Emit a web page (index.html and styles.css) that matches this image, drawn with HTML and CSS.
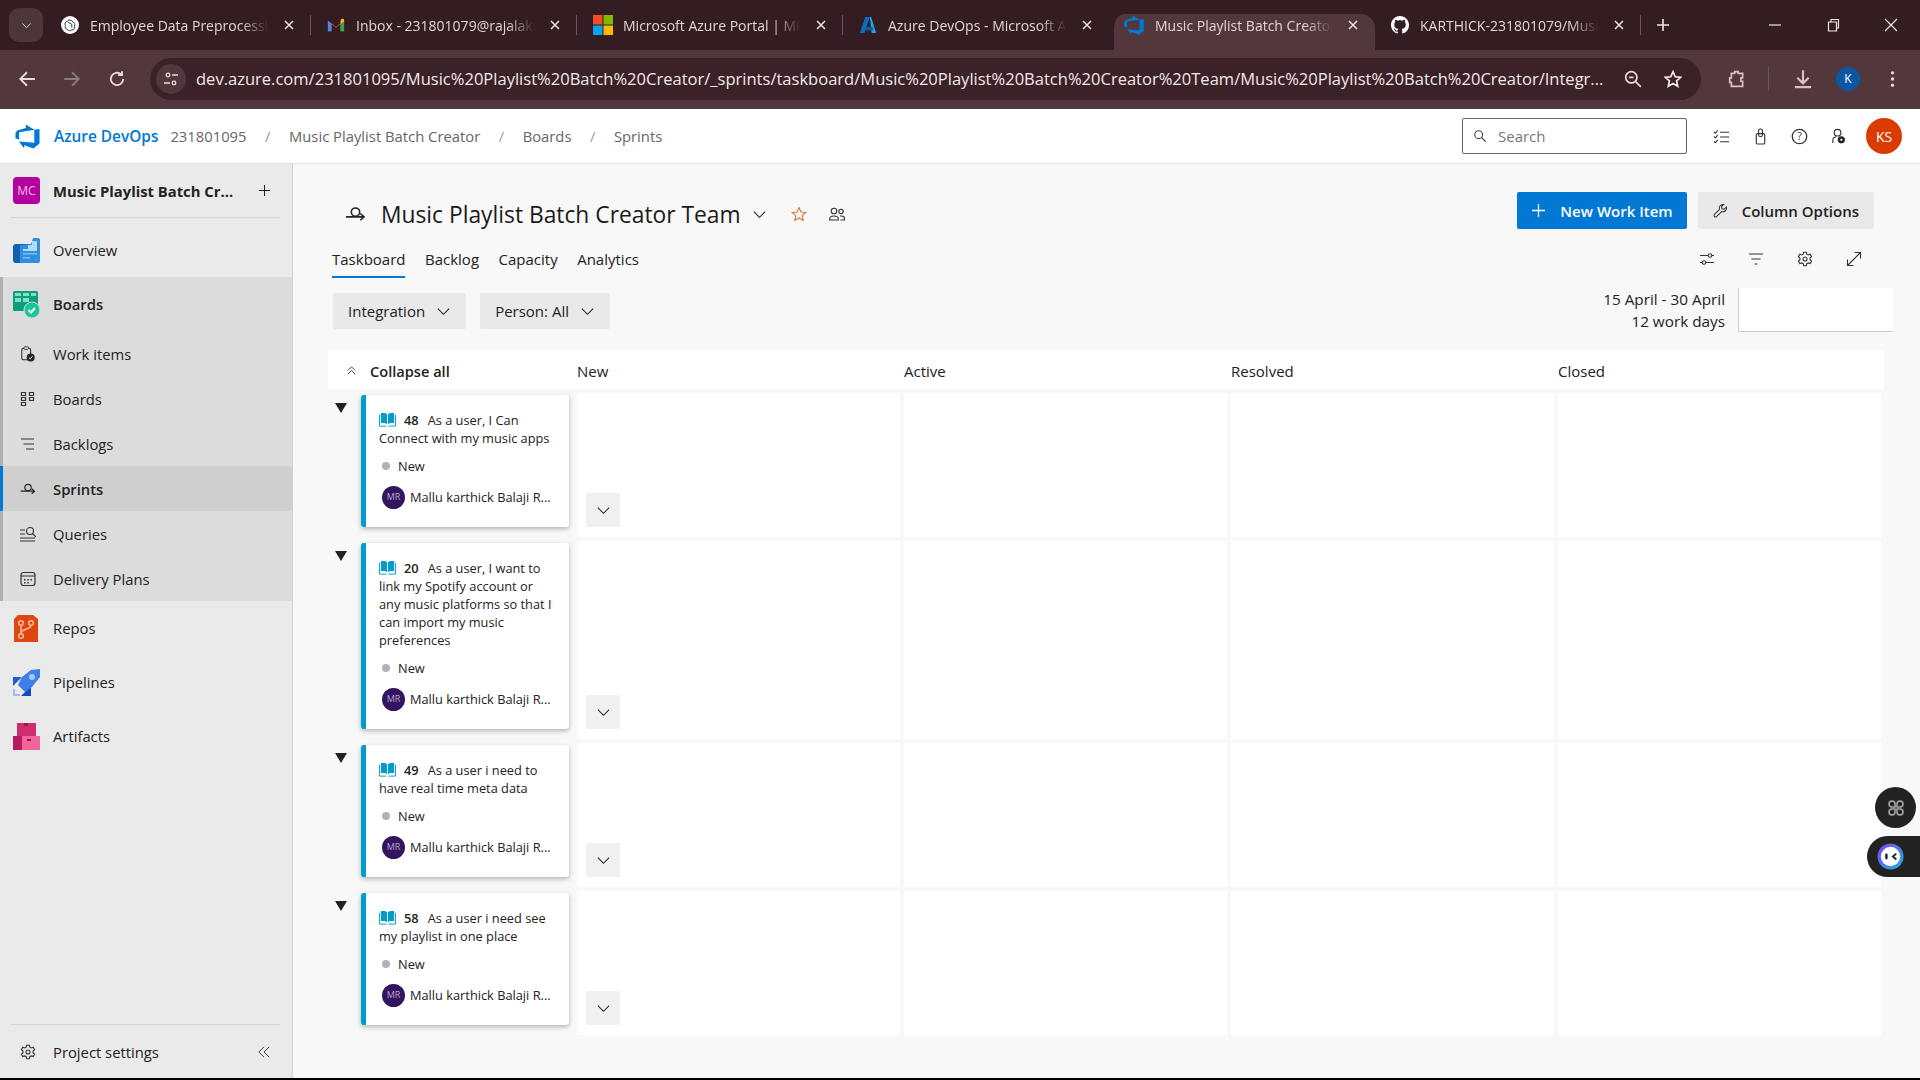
FILE: index.html
```html
<!DOCTYPE html>
<html lang="en">
<head>
    <meta charset="UTF-8">
    <meta name="viewport" content="width=device-width, initial-scale=1.0">
    <title>Music Playlist Batch Creator Team - Taskboard</title>
    <link rel="stylesheet" href="styles.css">
</head>
<body>
    <svg class="defs" width="0" height="0">
        <symbol id="devops" viewBox="0 0 18 18">
            <path fill="#0078d4" d="M17 4v9.74l-4 3.28-6.2-2.26V17l-3.51-4.59 10.23.8V4.44zm-3.41.49L7.85 1v2.29L2.23 4.94 1 6.52v3.59l2.41 1.06V6.17z"/>
        </symbol>
        <symbol id="chev" viewBox="0 0 16 16">
            <path d="M2 5l6 6 6-6" fill="none" stroke="currentColor" stroke-width="1.1"/>
        </symbol>
        <symbol id="close" viewBox="0 0 12 12">
            <path d="M2 2l8 8M10 2l-8 8" fill="none" stroke="currentColor" stroke-width="1.5"/>
        </symbol>
        <symbol id="sprint" viewBox="0 0 22 16">
            <circle cx="11" cy="6" r="4.4" fill="none" stroke="currentColor" stroke-width="1.6"/>
            <path d="M1 11h18M16 7.5l4 3.5-4 3.5" fill="none" stroke="currentColor" stroke-width="1.6"/>
        </symbol>
        <symbol id="gear" viewBox="0 0 16 16">
            <path d="M6.6 1.2h2.8l.4 2 1.500.8 1.900-.7 1.400 2.400-1.500 1.300v1.900l1.500 1.300-1.400 2.400-1.900-.7-1.500.8-.4 2H6.600l-.4-2-1.500-.8-1.900.7-1.400-2.400 1.500-1.300V7L1.400 5.700l1.400-2.400 1.900.7 1.500-.8z" fill="none" stroke="currentColor" stroke-width="1.1"/>
            <circle cx="8" cy="8" r="2" fill="none" stroke="currentColor" stroke-width="1.1"/>
        </symbol>
        <symbol id="story" viewBox="0 0 18 15">
            <path d="M2 .5h2.500c1.800 0 3 .5 4 1.500v10.500c-1-.8-2.200-1.200-4-1.200H2z" fill="#009ccc"/>
            <path d="M16 .5h-2.500c-1.800 0-3 .5-4 1.500v10.500c1-.8 2.200-1.200 4-1.200H16z" fill="#009ccc"/>
            <path d="M.5 2.500v12h7.500M17.500 2.500v12H10" fill="none" stroke="#009ccc"/>
        </symbol>
    </svg>

    <div class="tabstrip">
        <div class="tab-menu"><svg class="i10"><use href="#chev"/></svg></div>
        <div class="tab">
            <svg class="favicon" viewBox="0 0 20 20"><circle cx="10" cy="10" r="10" fill="#fff"/><path d="M10 4.500a3 3 0 0 1 3 2.200 3 3 0 0 1 2 4.500 3 3 0 0 1-3 4.200 3 3 0 0 1-4.800-.5A3 3 0 0 1 5 10.500 3 3 0 0 1 7 5.800a3 3 0 0 1 3-1.300zM8 7l4 2.300v3.400" fill="none" stroke="#333" stroke-width="1.100"/></svg>
            <span class="tab-title">Employee Data Preprocessing</span>
            <svg class="tab-x"><use href="#close"/></svg>
        </div>
        <div class="tab">
            <svg class="favicon" viewBox="0 0 20 16"><path d="M1 15V3l9 7 9-7v12h-4V7l-5 4-5-4v8z" fill="#ea4335"/><path d="M1 15h4V7L1 3.500z" fill="#4285f4"/><path d="M15 15h4V3.500L15 7z" fill="#34a853"/><path d="M15 3v4l4-3V2.500C19 1 17 .5 16 1.500z" fill="#fbbc04"/></svg>
            <span class="tab-title">Inbox - 231801079@rajalakshmi.edu.in</span>
            <svg class="tab-x"><use href="#close"/></svg>
        </div>
        <div class="tab">
            <svg class="favicon ms" viewBox="0 0 20 20"><path fill="#f25022" d="M0 0h9.500v9.500H0z"/><path fill="#7fba00" d="M10.500 0H20v9.500h-9.500z"/><path fill="#00a4ef" d="M0 10.500h9.500V20H0z"/><path fill="#ffb900" d="M10.500 10.500H20V20h-9.500z"/></svg>
            <span class="tab-title">Microsoft Azure Portal | Microsoft</span>
            <svg class="tab-x"><use href="#close"/></svg>
        </div>
        <div class="tab no-sep">
            <svg class="favicon" viewBox="0 0 20 20"><path d="M7 1h5L6 19H1z" fill="#0a6fc2"/><path d="M12 1h1.500L19 19h-5z" fill="#1ea6e8"/><path d="M9 12h6l1 4H6z" fill="#0a5ea8"/></svg>
            <span class="tab-title">Azure DevOps - Microsoft Azure</span>
            <svg class="tab-x"><use href="#close"/></svg>
        </div>
        <div class="tab active no-sep">
            <svg class="favicon devops-ic"><use href="#devops"/></svg>
            <span class="tab-title">Music Playlist Batch Creator Team</span>
            <svg class="tab-x"><use href="#close"/></svg>
        </div>
        <div class="tab">
            <svg class="favicon" viewBox="0 0 16 16"><path fill="#fff" d="M8 0C3.58 0 0 3.58 0 8c0 3.54 2.29 6.53 5.47 7.59.4.07.55-.17.55-.38 0-.19-.01-.82-.01-1.49-2.01.37-2.53-.49-2.69-.94-.09-.23-.48-.94-.82-1.13-.28-.15-.68-.52-.01-.53.63-.01 1.08.58 1.23.82.72 1.21 1.87.87 2.33.66.07-.52.28-.87.51-1.07-1.78-.2-3.64-.89-3.64-3.95 0-.87.31-1.59.82-2.15-.08-.2-.36-1.02.08-2.12 0 0 .67-.21 2.2.82.64-.18 1.32-.27 2-.27.68 0 1.36.09 2 .27 1.53-1.04 2.2-.82 2.2-.82.44 1.1.16 1.92.08 2.12.51.56.82 1.27.82 2.15 0 3.07-1.87 3.75-3.65 3.95.29.25.54.73.54 1.48 0 1.07-.01 1.93-.01 2.2 0 .21.15.46.55.38A8.013 8.013 0 0016 8c0-4.42-3.58-8-8-8z"/></svg>
            <span class="tab-title">KARTHICK-231801079/Music-Playlist</span>
            <svg class="tab-x"><use href="#close"/></svg>
        </div>
        <svg class="new-tab" viewBox="0 0 14 14"><path d="M7 1v12M1 7h12" stroke="#f0e4e6" stroke-width="1.600"/></svg>
        <div class="win-controls">
            <svg viewBox="0 0 14 14"><path d="M1 7h12" stroke="#f0e4e6" stroke-width="1.200"/></svg>
            <svg viewBox="0 0 14 14"><path d="M2.500 4h8v9h-8zM5 4V1.500h7.500V10H10.500" fill="none" stroke="#f0e4e6" stroke-width="1.200"/></svg>
            <svg viewBox="0 0 14 14"><path d="M1 1l12 12M13 1L1 13" stroke="#f0e4e6" stroke-width="1.200"/></svg>
        </div>
    </div>

    <div class="toolbar">
        <svg class="tool" viewBox="0 0 16 16"><path d="M15 8H2M8 2L2 8l6 6" fill="none" stroke="#eadcde" stroke-width="1.600"/></svg>
        <svg class="tool" viewBox="0 0 16 16"><path d="M1 8h13M8 2l6 6-6 6" fill="none" stroke="#8d7a7d" stroke-width="1.600"/></svg>
        <svg class="tool" viewBox="0 0 16 16"><path d="M13.500 8a5.500 5.500 0 1 1-1.700-4M12.500 1v3.500H9" fill="none" stroke="#eadcde" stroke-width="1.600"/></svg>
        <div class="address">
            <span class="site-info"><svg viewBox="0 0 16 16"><circle cx="5" cy="4" r="1.800" fill="none" stroke="#eadcde" stroke-width="1.300"/><path d="M9 4h6M1 12h6" stroke="#eadcde" stroke-width="1.300"/><circle cx="11" cy="12" r="1.800" fill="none" stroke="#eadcde" stroke-width="1.300"/></svg></span>
            <span class="url">dev.azure.com/231801095/Music%20Playlist%20Batch%20Creator/_sprints/taskboard/Music%20Playlist%20Batch%20Creator%20Team/Music%20Playlist%20Batch%20Creator/Integr...</span>
            <svg class="tool zoom-ic" viewBox="0 0 16 16"><circle cx="6.500" cy="6.500" r="5" fill="none" stroke="#eadcde" stroke-width="1.500"/><path d="M10.500 10.500L15 15M4.500 6.500h4" stroke="#eadcde" stroke-width="1.500"/></svg>
            <svg class="tool star-ic" viewBox="0 0 16 16"><path d="M8 1.500l2 4.500 4.800.5-3.600 3.200 1 4.800L8 12l-4.200 2.500 1-4.800L1.200 6.500 6 6z" fill="none" stroke="#f3e8ea" stroke-width="1.500"/></svg>
        </div>
        <svg class="tool ext-ic" viewBox="0 0 16 16"><path d="M3 3h3V1.500h3V3h4v4h-1.500v3H13v4.500H3V11H1.500V7H3z" fill="none" stroke="#e6bcc4" stroke-width="1.500"/></svg>
        <span class="tool-sep"></span>
        <svg class="tool dl-ic" viewBox="0 0 16 16"><path d="M8 1v10M3.500 7L8 11.500 12.500 7M1.500 14.500h13" fill="none" stroke="#e6bcc4" stroke-width="1.700"/></svg>
        <span class="profile">K</span>
        <svg class="tool menu-ic" viewBox="0 0 4 16"><circle cx="2" cy="2.500" r="1.500" fill="#e6d6d8"/><circle cx="2" cy="8" r="1.500" fill="#e6d6d8"/><circle cx="2" cy="13.500" r="1.500" fill="#e6d6d8"/></svg>
    </div>

    <header class="topbar">
        <svg class="logo"><use href="#devops"/></svg>
        <span class="brand">Azure DevOps</span>
        <nav class="crumbs">
            <span>231801095</span><i>/</i>
            <span>Music Playlist Batch Creator</span><i>/</i>
            <span>Boards</span><i>/</i>
            <span>Sprints</span>
        </nav>
        <div class="search">
            <svg viewBox="0 0 16 16"><circle cx="6.500" cy="6.500" r="4.500" fill="none" stroke="#444" stroke-width="1.300"/><path d="M10 10l4.500 4.500" stroke="#444" stroke-width="1.300"/></svg>
            <span>Search</span>
        </div>
        <div class="top-icons">
            <svg viewBox="0 0 18 16"><path d="M1 3l1.500 1.500L5 1.500M1 8l1.500 1.500L5 6.500M1 13l1.500 1.500L5 11.500" fill="none" stroke="#333" stroke-width="1.100"/><path d="M7.500 3.500H17M7.500 8.500H17M7.500 13.500H17" stroke="#333" stroke-width="1.200"/></svg>
            <svg viewBox="0 0 16 18"><rect x="3.500" y="6" width="9" height="11" rx="1.500" fill="none" stroke="#333" stroke-width="1.200"/><rect x="6" y="1" width="4" height="8" rx="1.500" fill="none" stroke="#333" stroke-width="1.200"/></svg>
            <svg viewBox="0 0 16 16"><circle cx="8" cy="8" r="6.800" fill="none" stroke="#333" stroke-width="1.200"/><text x="8" y="11.500" class="help-q">?</text></svg>
            <svg viewBox="0 0 16 18"><circle cx="7" cy="5" r="3.500" fill="none" stroke="#333" stroke-width="1.200"/><path d="M2 16v-3c0-2 1.500-3.500 3.500-3.500" fill="none" stroke="#333" stroke-width="1.200"/><circle cx="11" cy="12.500" r="3.800" fill="#222"/><circle cx="11" cy="12.500" r="1.200" fill="#fff"/></svg>
        </div>
        <span class="avatar">KS</span>
    </header>

    <div class="page">
        <aside class="sidebar">
            <div class="project">
                <span class="project-badge">MC</span>
                <span class="project-name">Music Playlist Batch Cr...</span>
                <svg class="plus" viewBox="0 0 14 14"><path d="M7 1v12M1 7h12" stroke="#222" stroke-width="1.100"/></svg>
            </div>
            <a class="nav-item">
                <svg class="hub" viewBox="0 0 27 25"><path d="M3 6h19v19H3a3 3 0 0 1-3-3V9a3 3 0 0 1 3-3z" fill="#1261b0"/><path d="M7 7l11-1 2-6h5a2 2 0 0 1 2 2v21a2 2 0 0 1-2 2H7z" fill="#2f8fe0"/><path d="M10 11h5V7h4V3h5v10H10z" fill="#b5dcf7"/><path d="M10 15h14v1.500H10zM10 19h7v1.500h-7z" fill="#7dbdee"/></svg>
                <span>Overview</span>
            </a>
            <div class="nav-group">
                <a class="nav-item head">
                    <svg class="hub" viewBox="0 0 27 27"><rect width="25" height="20" rx="1.500" fill="#0f9d7a"/><path d="M2 2h6v3H2zM10 2h6v3h-6zM18 2h5v3h-5zM2 7h6v4H2zM10 7h6v4h-6z" fill="#7fe0c8"/><circle cx="19" cy="19" r="8" fill="#16c79a" stroke="#dcdcdc"/><path d="M15.500 19l2.500 2.500 4-4.500" fill="none" stroke="#fff" stroke-width="2"/></svg>
                    <span>Boards</span>
                </a>
                <a class="nav-sub">
                    <svg viewBox="0 0 16 18"><rect x="1" y="2.500" width="10" height="13" rx="2" fill="none" stroke="#333" stroke-width="1.200"/><rect x="3.500" y=".8" width="5" height="3" rx="1" fill="#dcdcdc" stroke="#333"/><circle cx="11" cy="13" r="4.500" fill="#222"/><path d="M9 13l1.500 1.500 2.500-3" fill="none" stroke="#fff"/></svg>
                    <span>Work items</span>
                </a>
                <a class="nav-sub">
                    <svg viewBox="0 0 16 16"><path d="M1.500 1.500h4v3h-4zM1.500 6.500h4v3h-4zM1.500 11.500h4v3h-4zM9.500 1.500h4v3h-4zM9.500 6.500h4v3h-4z" fill="none" stroke="#333" stroke-width="1.200"/></svg>
                    <span>Boards</span>
                </a>
                <a class="nav-sub">
                    <svg viewBox="0 0 16 16"><path d="M1 3h13M3.500 8H14M6 13h8" stroke="#333" stroke-width="1.200"/></svg>
                    <span>Backlogs</span>
                </a>
                <a class="nav-sub current">
                    <svg viewBox="0 0 22 16"><use href="#sprint"/></svg>
                    <span>Sprints</span>
                </a>
                <a class="nav-sub">
                    <svg viewBox="0 0 16 16"><path d="M0 4h5M0 8h5M0 12h15M0 15h15" stroke="#333" stroke-width="1.100"/><circle cx="10" cy="5" r="3.500" fill="none" stroke="#333" stroke-width="1.100"/><path d="M12.500 7.500L16 11" stroke="#333" stroke-width="1.100"/></svg>
                    <span>Queries</span>
                </a>
                <a class="nav-sub">
                    <svg viewBox="0 0 16 16"><rect x="1" y="1.500" width="14" height="13" rx="2.500" fill="none" stroke="#333" stroke-width="1.200"/><path d="M1 5h14" stroke="#333"/><path d="M4 8h1.500v1.500H4zM7.300 8h1.500v1.500H7.300zM10.500 8H12v1.500h-1.500zM4 11h1.500v1.500H4zM7.300 11h1.500v1.500H7.300z" fill="#333"/></svg>
                    <span>Delivery Plans</span>
                </a>
            </div>
            <a class="nav-item">
                <svg class="hub" viewBox="0 0 27 27"><path d="M5 0h15l5 4v23H1V4z" fill="#e0470e"/><g fill="none" stroke="#f9b9a0" stroke-width="1.500"><circle cx="8" cy="8" r="2.300"/><circle cx="18" cy="8" r="2.300"/><circle cx="8" cy="21" r="2.300"/><path d="M8 10.500v8M18 10.500c0 4-10 3-10 8"/></g></svg>
                <span>Repos</span>
            </a>
            <a class="nav-item">
                <svg class="hub" viewBox="0 0 27 27"><path d="M0 8h9l-9 9z" fill="#1d5fd0"/><path d="M18 17v10H8z" fill="#0f4cc0"/><path d="M9 8l9-7 9-1v8l-8 10-7 5-7-7z" fill="#3f7de8"/><circle cx="19" cy="8" r="3" fill="#a9c8f7"/><path d="M0 20h2v5h5v2H0z" fill="#9cbcf5"/></svg>
                <span>Pipelines</span>
            </a>
            <a class="nav-item">
                <svg class="hub" viewBox="0 0 27 27"><rect x="4" width="19" height="14" fill="#d02c70"/><rect y="13" width="14" height="14" fill="#b81a5e"/><rect x="9" y="13" width="18" height="14" fill="#f0659c"/><path d="M11 0h4v3h-4zM14 16h4v2h-4z" fill="#9a1450"/></svg>
                <span>Artifacts</span>
            </a>
            <div class="side-foot">
                <svg class="gear-ic"><use href="#gear"/></svg>
                <span>Project settings</span>
                <svg class="collapse" viewBox="0 0 14 14"><path d="M7 1L1 7l6 6M13 1L7 7l6 6" fill="none" stroke="#333" stroke-width="1.100"/></svg>
            </div>
        </aside>

        <main class="content">
            <div class="title-row">
                <svg class="title-ic"><use href="#sprint"/></svg>
                <h1>Music Playlist Batch Creator Team</h1>
                <svg class="title-chev"><use href="#chev"/></svg>
                <svg class="star" viewBox="0 0 16 16"><path d="M8 1.500l2 4.500 4.800.5-3.600 3.200 1 4.800L8 12l-4.200 2.500 1-4.800L1.200 6.500 6 6z" fill="none" stroke="#d9783a" stroke-width="1.100"/></svg>
                <svg class="people" viewBox="0 0 16 14"><circle cx="5" cy="3.500" r="2.800" fill="none" stroke="#333" stroke-width="1.100"/><path d="M.7 12.500v-1c0-2 1.500-3 4.300-3s4.300 1 4.300 3v1z" fill="none" stroke="#333" stroke-width="1.100"/><circle cx="12" cy="4" r="2.200" fill="none" stroke="#333" stroke-width="1.100"/><path d="M11 8.500h1.500c1.800 0 3 .8 3 2.500v1.500h-4" fill="none" stroke="#333" stroke-width="1.100"/></svg>
                <div class="actions">
                    <button class="btn primary"><svg viewBox="0 0 14 14"><path d="M7 1v12M1 7h12" stroke="#fff" stroke-width="1.200"/></svg>New Work Item</button>
                    <button class="btn"><svg viewBox="0 0 16 16"><path d="M10.500 1.500a4 4 0 0 0-3.600 5.300L1.500 12.200a1.600 1.600 0 0 0 2.300 2.300l5.400-5.400a4 4 0 0 0 5.200-4.800l-2.500 2.400-2.300-.6-.6-2.300 2.400-2.300z" fill="none" stroke="#333" stroke-width="1.100"/></svg>Column Options</button>
                </div>
            </div>

            <div class="tabs-row">
                <a class="page-tab on">Taskboard</a>
                <a class="page-tab">Backlog</a>
                <a class="page-tab">Capacity</a>
                <a class="page-tab">Analytics</a>
                <div class="view-icons">
                    <svg viewBox="0 0 16 16"><path d="M1 4.500h8M13 4.500h2M1 11.500h2M7 11.500h8" stroke="#333" stroke-width="1.100"/><circle cx="11" cy="4.500" r="1.800" fill="none" stroke="#333" stroke-width="1.100"/><circle cx="5" cy="11.500" r="1.800" fill="none" stroke="#333" stroke-width="1.100"/></svg>
                    <svg viewBox="0 0 16 16"><path d="M1 3h14M3.500 8h9M6.500 13h3" stroke="#333" stroke-width="1.200"/></svg>
                    <svg><use href="#gear"/></svg>
                    <svg viewBox="0 0 16 16"><path d="M1.500 14.500l13-13M8.500 1.500h6v6M1.500 8.500v6h6" fill="none" stroke="#333" stroke-width="1.100"/></svg>
                </div>
            </div>

            <div class="filter-row">
                <button class="pick">Integration<svg><use href="#chev"/></svg></button>
                <button class="pick">Person: All<svg><use href="#chev"/></svg></button>
                <div class="sprint-dates">
                    <div>15 April - 30 April</div>
                    <div>12 work days</div>
                </div>
                <div class="burndown"></div>
            </div>

            <div class="board">
                <div class="board-head">
                    <div class="collapse-all"><svg viewBox="0 0 12 12"><path d="M2 6l4-4 4 4M2 10l4-4 4 4" fill="none" stroke="#333"/></svg>Collapse all</div>
                    <div>New</div>
                    <div>Active</div>
                    <div>Resolved</div>
                    <div>Closed</div>
                </div>

                <div class="board-row">
                    <div class="story">
                        <span class="tri"></span>
                        <div class="card">
                            <p class="card-title"><svg class="story-ic"><use href="#story"/></svg><b>48</b>As a user, I Can Connect with my music apps</p>
                            <div class="card-state"><i></i>New</div>
                            <div class="card-owner"><span class="mr">MR</span><span>Mallu karthick Balaji R...</span></div>
                        </div>
                    </div>
                    <div class="cell first"><button class="more"><svg><use href="#chev"/></svg></button></div>
                    <div class="cell"></div>
                    <div class="cell"></div>
                    <div class="cell"></div>
                </div>

                <div class="board-row">
                    <div class="story">
                        <span class="tri"></span>
                        <div class="card">
                            <p class="card-title"><svg class="story-ic"><use href="#story"/></svg><b>20</b>As a user, I want to link my Spotify account or any music platforms so that I can import my music preferences</p>
                            <div class="card-state"><i></i>New</div>
                            <div class="card-owner"><span class="mr">MR</span><span>Mallu karthick Balaji R...</span></div>
                        </div>
                    </div>
                    <div class="cell first"><button class="more"><svg><use href="#chev"/></svg></button></div>
                    <div class="cell"></div>
                    <div class="cell"></div>
                    <div class="cell"></div>
                </div>

                <div class="board-row">
                    <div class="story">
                        <span class="tri"></span>
                        <div class="card">
                            <p class="card-title"><svg class="story-ic"><use href="#story"/></svg><b>49</b>As a user i need to have real time meta data</p>
                            <div class="card-state"><i></i>New</div>
                            <div class="card-owner"><span class="mr">MR</span><span>Mallu karthick Balaji R...</span></div>
                        </div>
                    </div>
                    <div class="cell first"><button class="more"><svg><use href="#chev"/></svg></button></div>
                    <div class="cell"></div>
                    <div class="cell"></div>
                    <div class="cell"></div>
                </div>

                <div class="board-row">
                    <div class="story">
                        <span class="tri"></span>
                        <div class="card">
                            <p class="card-title"><svg class="story-ic"><use href="#story"/></svg><b>58</b>As a user i need see my playlist in one place</p>
                            <div class="card-state"><i></i>New</div>
                            <div class="card-owner"><span class="mr">MR</span><span>Mallu karthick Balaji R...</span></div>
                        </div>
                    </div>
                    <div class="cell first"><button class="more"><svg><use href="#chev"/></svg></button></div>
                    <div class="cell"></div>
                    <div class="cell"></div>
                    <div class="cell"></div>
                </div>
            </div>
        </main>
    </div>

    <div class="float-round">
        <svg viewBox="0 0 18 18"><g fill="none" stroke="#aaa" stroke-width="1.500"><path d="M2 5a3 3 0 0 1 6 0v3H5a3 3 0 0 1-3-3zM10 5a3 3 0 0 1 6 0 3 3 0 0 1-3 3h-3zM2 13a3 3 0 0 1 3-3h3v3a3 3 0 0 1-6 0zM10 10h3a3 3 0 0 1 0 6 3 3 0 0 1-3-3z"/></g></svg>
    </div>
    <div class="float-pill">
        <svg viewBox="0 0 28 28"><defs><linearGradient id="ring" x1="0" y1="0" x2="1" y2="1"><stop offset="0" stop-color="#8a3df0"/><stop offset="1" stop-color="#18b5e0"/></linearGradient></defs><circle cx="14" cy="14" r="13.500" fill="url(#ring)"/><circle cx="14" cy="14" r="10" fill="#fff"/><rect x="8.500" y="11" width="2.500" height="6" rx="1.200" fill="#222"/><path d="M20 11l-3.500 3 3.500 3" fill="none" stroke="#222" stroke-width="2"/></svg>
    </div>
</body>
</html>
```

FILE: styles.css
```css
* {
    box-sizing: border-box;
    margin: 0;
    padding: 0;
}
html, body {
    height: 1080px;
    overflow: hidden;
}
body {
    font-family: "Open Sans", "Noto Sans", sans-serif;
    font-size: 14px;
    color: #222;
    background-color: #f8f8f8;
    border-bottom: 2px solid #000;
    display: flex;
    flex-direction: column;
    position: relative;
}
svg {
    display: block;
    flex: none;
}
button {
    font: inherit;
    color: inherit;
    border: none;
}
.defs {
    position: absolute;
}

/* browser tabs */
.tabstrip {
    height: 50px;
    flex: none;
    background-color: #331c22;
    color: #e3d3d6;
    display: flex;
    align-items: flex-end;
    padding-left: 9px;
    position: relative;
}
.tab-menu {
    width: 34px;
    height: 34px;
    margin: 0 2px 8px 0;
    border-radius: 10px;
    background-color: #4d363b;
    display: flex;
    align-items: center;
    justify-content: center;
    color: #fff;
}
.i10 {
    width: 11px;
    height: 11px;
}
.tab {
    width: 266px;
    height: 36px;
    padding: 0 16px 14px 16px;
    display: flex;
    align-items: center;
    position: relative;
    border-radius: 10px 10px 0 0;
}
.tab::after {
    content: "";
    position: absolute;
    right: 0;
    top: 1px;
    height: 20px;
    width: 1px;
    background-color: #6d565a;
}
.tab.no-sep::after {
    display: none;
}
.tab.active {
    background-color: #52373c;
    background-clip: padding-box;
    border-left: 5px solid transparent;
    padding-left: 11px;
    border-radius: 15px 14px 0 0;
}
.favicon {
    width: 18px;
    height: 18px;
    margin-right: 11px;
}
.favicon.ms {
    width: 20px;
    height: 20px;
    margin-right: 10px;
}
.favicon.devops-ic {
    width: 22px;
    height: 22px;
    margin: 0 10px 0 -2px;
}
.tab-title {
    flex: 1;
    min-width: 0;
    overflow: hidden;
    white-space: nowrap;
    font-size: 14px;
    -webkit-mask-image: linear-gradient(to right, #000 84%, transparent);
    mask-image: linear-gradient(to right, #000 84%, transparent);
}
.tab-x {
    width: 12px;
    height: 12px;
    margin-left: 14px;
    color: #f0e4e6;
}
.new-tab {
    width: 14px;
    height: 14px;
    margin: 0 0 18px 15px;
}
.win-controls {
    margin: 0 0 18px auto;
    display: flex;
    gap: 44px;
    padding-right: 22px;
}
.win-controls svg {
    width: 14px;
    height: 14px;
}

/* browser toolbar */
.toolbar {
    height: 59px;
    flex: none;
    background-color: #52373c;
    display: flex;
    align-items: center;
    padding: 0 0 2px 18px;
}
.tool {
    width: 18px;
    height: 18px;
    margin-right: 27px;
}
.address {
    width: 1551px;
    height: 42px;
    margin-left: -3px;
    border-radius: 21px;
    background-color: #3a2228;
    display: flex;
    align-items: center;
    padding-left: 6px;
}
.site-info {
    width: 30px;
    height: 30px;
    border-radius: 50%;
    background-color: #52373c;
    display: flex;
    align-items: center;
    justify-content: center;
    margin-right: 10px;
}
.site-info svg {
    width: 16px;
    height: 16px;
}
.url {
    width: 1410px;
    font-size: 16.55px;
    color: #f3e8ea;
    white-space: nowrap;
    overflow: hidden;
}
.zoom-ic {
    margin: 0 0 0 18px;
}
.star-ic {
    margin: 0 0 0 22px;
}
.ext-ic {
    margin: 0 0 0 27px;
}
.tool-sep {
    width: 1px;
    height: 24px;
    background-color: #6d565a;
    margin: 0 24px 0 22px;
}
.dl-ic {
    margin: 0;
    width: 20px;
    height: 20px;
}
.profile {
    width: 24px;
    height: 24px;
    border-radius: 50%;
    background-color: #0b57a4;
    color: #fff;
    font-size: 12px;
    display: flex;
    align-items: center;
    justify-content: center;
    margin-left: 23px;
}
.menu-ic {
    width: 5px;
    height: 18px;
    margin: 0 0 0 30px;
}

/* azure devops header */
.topbar {
    height: 55px;
    flex: none;
    background-color: #fff;
    border-bottom: 1px solid #e3e3e3;
    display: flex;
    align-items: center;
    padding: 0 18px 0 14px;
}
.logo {
    width: 27px;
    height: 27px;
    margin-right: 13px;
}
.brand {
    color: #0078d4;
    font-weight: 600;
    font-size: 15.4px;
    margin-right: 12px;
}
.crumbs {
    display: flex;
    gap: 18.5px;
    color: #666;
    font-size: 14.8px;
}
.crumbs i {
    font-style: normal;
    color: #999;
}
.search {
    margin-left: auto;
    width: 225px;
    height: 36px;
    border: 1px solid #666;
    border-radius: 2px;
    display: flex;
    align-items: center;
    gap: 11px;
    padding-left: 10px;
    font-size: 15px;
    color: #777;
}
.search svg {
    width: 14px;
    height: 14px;
}
.top-icons {
    display: flex;
    align-items: center;
    gap: 22px;
    margin: 0 19px 0 26px;
}
.top-icons svg {
    width: 17px;
    height: 17px;
}
.help-q {
    font-size: 10px;
    text-anchor: middle;
    fill: #333;
}
.avatar {
    width: 36px;
    height: 36px;
    border-radius: 50%;
    background-color: #da3b01;
    color: #fff;
    font-size: 14px;
    display: flex;
    align-items: center;
    justify-content: center;
}

/* left nav */
.page {
    flex: 1;
    min-height: 0;
    display: flex;
}
.sidebar {
    width: 293px;
    flex: none;
    background-color: #eaeaea;
    border-right: 1px solid #d2d2d2;
    display: flex;
    flex-direction: column;
    font-size: 14.8px;
    color: #222;
}
.project {
    height: 54px;
    margin: 0 12px 5px 11px;
    border-bottom: 1px solid #d4d4d4;
    display: flex;
    align-items: center;
    flex: none;
    padding-left: 2px;
}
.project-badge {
    width: 27px;
    height: 27px;
    border-radius: 4px;
    background-color: #b4009e;
    color: #f0c0e8;
    font-size: 12px;
    display: flex;
    align-items: center;
    justify-content: center;
    margin-right: 13px;
}
.project-name {
    font-weight: 700;
    flex: 1;
    white-space: nowrap;
}
.plus {
    width: 13px;
    height: 13px;
    margin: 0 9px 0 0;
}
.nav-item {
    height: 54px;
    flex: none;
    display: flex;
    align-items: center;
    padding-left: 13px;
}
.hub {
    width: 27px;
    height: 27px;
    margin-right: 13px;
}
.nav-group {
    background-color: #dcdcdc;
    border-left: 3px solid #b0b0b0;
}
.nav-group .nav-item {
    padding-left: 10px;
    font-weight: 600;
}
.nav-sub {
    height: 45px;
    display: flex;
    align-items: center;
    padding-left: 17px;
    position: relative;
}
.nav-sub svg {
    width: 16px;
    height: 16px;
    margin-right: 17px;
}
.nav-sub.current {
    background-color: #cfcfcf;
    font-weight: 600;
    border-radius: 0 3px 3px 0;
}
.nav-sub.current::before {
    content: "";
    position: absolute;
    left: -3px;
    top: 0;
    bottom: 0;
    width: 3px;
    background-color: #0078d4;
}
.side-foot {
    margin: auto 12px 0 11px;
    height: 54px;
    border-top: 1px solid #d4d4d4;
    display: flex;
    align-items: center;
    padding-left: 9px;
}
.gear-ic {
    width: 16px;
    height: 16px;
    margin-right: 17px;
    color: #333;
}
.side-foot span {
    flex: 1;
}
.collapse {
    width: 12px;
    height: 12px;
    margin-right: 10px;
}

/* main content */
.content {
    flex: 1;
    min-width: 0;
    padding: 0 36px 0 35px;
    position: relative;
}
.title-row {
    height: 77px;
    padding: 23px 0 0 17px;
    display: flex;
    align-items: center;
}
.title-ic {
    width: 21px;
    height: 16px;
    margin-right: 15px;
    color: #222;
}
h1 {
    font-size: 22.8px;
    font-weight: 500;
    color: #1b1b1b;
    white-space: nowrap;
}
.title-chev {
    width: 15px;
    height: 15px;
    margin-left: 11px;
}
.star {
    width: 16px;
    height: 16px;
    margin-left: 24px;
}
.people {
    width: 16px;
    height: 15px;
    margin-left: 22px;
}
.actions {
    margin: 5px 0 0 auto;
    align-self: flex-start;
    display: flex;
    gap: 11px;
    padding-right: 10px;
}
.btn {
    height: 37px;
    padding: 0 15px;
    border-radius: 2px;
    background-color: #e9e9e9;
    font-weight: 600;
    font-size: 15px;
    display: flex;
    align-items: center;
    gap: 14px;
    color: #222;
}
.btn svg {
    width: 15px;
    height: 15px;
}
.btn.primary {
    padding: 0 14px;
    background-color: #0078d4;
    color: #fff;
}
.tabs-row {
    height: 47px;
    display: flex;
    align-items: flex-start;
    gap: 19.5px;
    padding: 4px 0 0 4px;
    font-size: 15px;
}
.page-tab {
    height: 33px;
    padding-top: 4px;
    white-space: nowrap;
}
.page-tab.on {
    font-weight: 500;
    border-bottom: 2px solid #0078d4;
}
.view-icons {
    margin-left: auto;
    display: flex;
    gap: 33px;
    padding: 6px 22px 0 0;
}
.view-icons svg {
    width: 16px;
    height: 16px;
    color: #333;
}
.filter-row {
    height: 62px;
    display: flex;
    align-items: flex-start;
    gap: 14px;
    padding: 5px 0 0 5px;
    margin-right: -9px;
}
.pick {
    height: 36px;
    padding: 0 15px;
    border-radius: 2px;
    background-color: #e9e9e9;
    display: flex;
    align-items: center;
    gap: 11px;
    font-size: 15px;
    font-weight: 500;
}
.pick svg {
    width: 15px;
    height: 15px;
}
.sprint-dates {
    margin: -5px -1px 0 auto;
    text-align: right;
    font-size: 15.3px;
    line-height: 22px;
}
.burndown {
    width: 155px;
    height: 44px;
    margin-top: -5px;
    background-color: #fff;
    border-left: 1px solid #ccc;
    border-bottom: 1px solid #ccc;
}

/* board */
.board {
    width: 1556px;
}
.board-head {
    height: 39px;
    background-color: #fff;
    display: grid;
    grid-template-columns: 245px repeat(4, 327px);
    align-items: center;
    font-size: 15px;
    margin-bottom: 4px;
    padding: 2px 0 0 4px;
}
.collapse-all {
    display: flex;
    align-items: center;
    gap: 13px;
    padding-left: 14px;
    font-weight: 600;
    font-size: 14.6px;
}
.collapse-all svg {
    width: 11px;
    height: 11px;
}
.board-row {
    display: grid;
    grid-template-columns: 245px repeat(4, 323px);
    column-gap: 4px;
    margin-bottom: 4px;
}
.story {
    display: flex;
    align-items: flex-start;
    padding: 2px 0 10px 7px;
}
.tri {
    width: 0;
    height: 0;
    margin: 8px 14px 0 0;
    border-left: 6px solid transparent;
    border-right: 6px solid transparent;
    border-top: 10px solid #222;
}
.card {
    width: 208px;
    background-color: #fff;
    border-left: 5px solid #009ccc;
    border-radius: 3px;
    box-shadow: 0 2px 5px rgba(0, 0, 0, 0.28);
    padding: 16px 12px 18px 13px;
    font-size: 12.8px;
    line-height: 18px;
}
.story-ic {
    display: inline-block;
    width: 17px;
    height: 15px;
    vertical-align: -2px;
    margin-right: 8px;
}
.card-title b {
    font-weight: 600;
    margin-right: 9px;
}
.card-state {
    display: flex;
    align-items: center;
    gap: 8px;
    margin: 10px 0 10px 3px;
}
.card-state i {
    width: 8px;
    height: 8px;
    border-radius: 50%;
    background-color: #b2b2b2;
}
.card-owner {
    display: flex;
    align-items: center;
    gap: 5px;
    margin-left: 3px;
    height: 24px;
    white-space: nowrap;
}
.mr {
    width: 23px;
    height: 23px;
    border-radius: 50%;
    background-color: #32145f;
    color: #b9a6d2;
    font-size: 9px;
    display: flex;
    align-items: center;
    justify-content: center;
}
.cell {
    background-color: #fff;
}
.cell.first {
    display: flex;
    align-items: flex-end;
    padding: 0 0 10px 9px;
}
.more {
    width: 34px;
    height: 34px;
    background-color: #f0f0f0;
    border-radius: 2px;
    display: flex;
    align-items: center;
    justify-content: center;
}
.more svg {
    width: 15px;
    height: 15px;
}

/* floating widgets */
.float-round {
    position: absolute;
    left: 1875px;
    top: 787px;
    width: 41px;
    height: 41px;
    border-radius: 50%;
    background-color: #222;
    display: flex;
    align-items: center;
    justify-content: center;
}
.float-round svg {
    width: 18px;
    height: 18px;
}
.float-pill {
    position: absolute;
    left: 1867px;
    top: 836px;
    width: 53px;
    height: 41px;
    border-radius: 21px 0 0 21px;
    background-color: #222;
    display: flex;
    align-items: center;
    padding-left: 10px;
}
.float-pill svg {
    width: 27px;
    height: 27px;
}
```
